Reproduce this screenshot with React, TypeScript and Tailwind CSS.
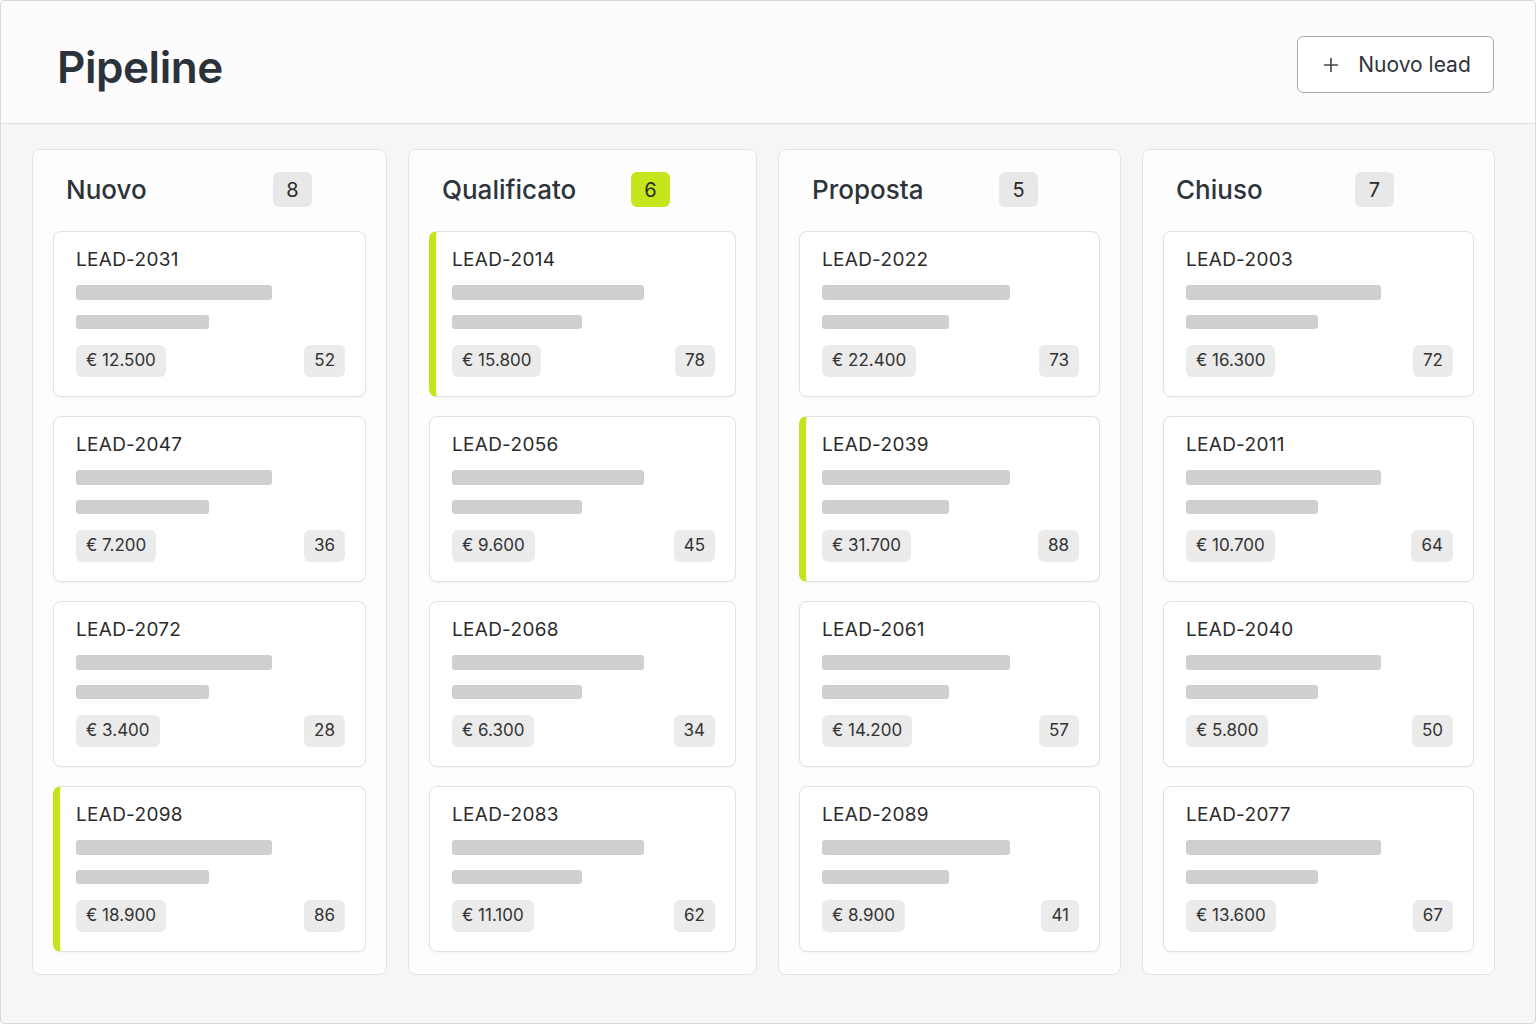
import { Plus } from "lucide-react";

type Lead = {
  id: string;
  amount: string;
  score: number;
  hot?: boolean;
};

type Stage = {
  name: string;
  count: number;
  active?: boolean;
  titleW: string;
  leads: Lead[];
};

const stages: Stage[] = [
  {
    name: "Nuovo",
    count: 8,
    titleW: "w-[207px]",
    leads: [
      { id: "LEAD-2031", amount: "€ 12.500", score: 52 },
      { id: "LEAD-2047", amount: "€ 7.200", score: 36 },
      { id: "LEAD-2072", amount: "€ 3.400", score: 28 },
      { id: "LEAD-2098", amount: "€ 18.900", score: 86, hot: true },
    ],
  },
  {
    name: "Qualificato",
    count: 6,
    active: true,
    titleW: "w-[189px]",
    leads: [
      { id: "LEAD-2014", amount: "€ 15.800", score: 78, hot: true },
      { id: "LEAD-2056", amount: "€ 9.600", score: 45 },
      { id: "LEAD-2068", amount: "€ 6.300", score: 34 },
      { id: "LEAD-2083", amount: "€ 11.100", score: 62 },
    ],
  },
  {
    name: "Proposta",
    count: 5,
    titleW: "w-[187px]",
    leads: [
      { id: "LEAD-2022", amount: "€ 22.400", score: 73 },
      { id: "LEAD-2039", amount: "€ 31.700", score: 88, hot: true },
      { id: "LEAD-2061", amount: "€ 14.200", score: 57 },
      { id: "LEAD-2089", amount: "€ 8.900", score: 41 },
    ],
  },
  {
    name: "Chiuso",
    count: 7,
    titleW: "w-[179px]",
    leads: [
      { id: "LEAD-2003", amount: "€ 16.300", score: 72 },
      { id: "LEAD-2011", amount: "€ 10.700", score: 64 },
      { id: "LEAD-2040", amount: "€ 5.800", score: 50 },
      { id: "LEAD-2077", amount: "€ 13.600", score: 67 },
    ],
  },
];

const LeadCard = ({ lead }: { lead: Lead }) => {
  const { id, amount, score, hot } = lead;

  return (
    <div
      className={`flex h-[166px] flex-col rounded-lg border border-[#e1e1e1] bg-white pr-5 pt-4 shadow-[0_1px_3px_rgba(0,0,0,0.04)] ${
        hot ? "border-l-[7px] border-l-[#c5e31b] pl-[16px]" : "pl-[22px]"
      }`}
    >
      <div className="text-[19px] leading-6 tracking-[0.015em] text-[#2b2b2b]">{id}</div>
      <div className="mt-[13px] h-[15px] w-[73%] rounded-[3px] bg-[#cfcfd0]" />
      <div className="mt-[15px] h-[14px] w-[49.5%] rounded-[3px] bg-[#cfcfd0]" />
      <div className="mt-[16px] flex items-center justify-between">
        <span className="flex h-8 items-center rounded-md bg-[#ebebeb] px-[10px] text-[17px] text-[#333]">
          {amount}
        </span>
        <span className="flex h-8 items-center rounded-md bg-[#ebebeb] px-[10px] text-[17px] text-[#333]">
          {score}
        </span>
      </div>
    </div>
  );
};

const StageColumn = ({ stage }: { stage: Stage }) => {
  const { name, count, active, titleW, leads } = stage;

  return (
    <div className="flex flex-col rounded-lg border border-[#e4e4e4] bg-[#fdfdfd] px-5 pb-[22px] pt-[22px]">
      <div className="flex h-[35px] items-center pl-[13px]">
        <span className={`${titleW} text-[26px] font-medium text-[#2e333a]`}>{name}</span>
        <span
          className={`flex h-[35px] w-[39px] items-center justify-center rounded-md text-[20px] text-[#2b2b2b] ${
            active ? "bg-[#c7e51c]" : "bg-[#e8e8e8]"
          }`}
        >
          {count}
        </span>
      </div>
      <div className="mt-6 flex flex-col gap-[19px]">
        {leads.map((lead) => (
          <LeadCard key={lead.id} lead={lead} />
        ))}
      </div>
    </div>
  );
};

const App = () => {
  return (
    <div className="h-[1024px] w-[1536px] overflow-hidden rounded-[4px] border border-[#d9d9d9] bg-[#f6f6f6] font-['Inter','Liberation_Sans',sans-serif]">
      <header className="flex h-[123px] items-center justify-between border-b border-[#dedede] bg-[#fcfcfc] pl-[56px] pr-[41px]">
        <h1 className="pt-[10px] text-[44px] font-semibold tracking-[-0.01em] text-[#2b323b]">Pipeline</h1>
        <button className="mt-[5px] flex h-[57px] w-[197px] items-center justify-center gap-[16px] rounded-md border border-[#a9a9a9] bg-white text-[21px] text-[#2f343a]">
          <Plus size={22} strokeWidth={1.75} className="text-[#444]" />
          Nuovo lead
        </button>
      </header>
      <main className="grid grid-cols-[355px_349px_343px_353px] gap-[21px] pl-[31px] pt-[25px]">
        {stages.map((stage) => (
          <StageColumn key={stage.name} stage={stage} />
        ))}
      </main>
    </div>
  );
};

export default App;
